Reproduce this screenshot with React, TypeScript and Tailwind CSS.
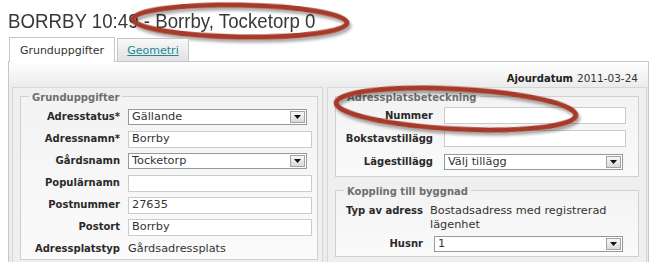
import React from 'react';

const Label: React.FC<{ w: string; children: React.ReactNode }> = ({ w, children }) => (
  <div className={`${w} shrink-0 text-right text-[10px] font-bold leading-[14px] text-[#2a2a2a]`}>{children}</div>
);

const TextBox: React.FC<{ value?: string; w: string; ml: string }> = ({ value, w, ml }) => (
  <div className={`${w} ${ml} flex h-[17px] items-center border border-[#cbcbcb] bg-white pl-[3px] text-[11.3px] leading-none text-[#333]`}>
    {value}
  </div>
);

const Select: React.FC<{ value: string; w: string; ml: string }> = ({ value, w, ml }) => (
  <div className={`${w} ${ml} flex h-[16px] items-center border border-[#8f9aa3] bg-white pl-[3px] text-[11.3px] leading-none text-[#333]`}>
    <span className="flex-1 truncate">{value}</span>
    <span className="mr-px flex h-[12px] w-[15px] items-center justify-center border border-[#a3a3a3] bg-gradient-to-b from-[#f8f8f8] to-[#d9d9d9]">
      <svg width="7" height="4" viewBox="0 0 7 4">
        <path d="M0 0h7L3.5 4z" fill="#111" />
      </svg>
    </span>
  </div>
);

const Legend: React.FC<{ children: React.ReactNode }> = ({ children }) => (
  <legend className="ml-[8px] px-[3px] pt-[3px] text-[10px] font-bold leading-[13px] text-[#6e6e6e]">{children}</legend>
);

const App: React.FC = () => {
  const left = [
    { label: 'Adresstatus*', kind: 'select', value: 'Gällande' },
    { label: 'Adressnamn*', kind: 'input', value: 'Borrby' },
    { label: 'Gårdsnamn', kind: 'select', value: 'Tocketorp' },
    { label: 'Populärnamn', kind: 'input', value: '' },
    { label: 'Postnummer', kind: 'input', value: '27635' },
    { label: 'Postort', kind: 'input', value: 'Borrby' },
  ];

  return (
    <div className="relative h-[262px] w-[653px] overflow-hidden bg-white font-['DejaVu_Sans',Verdana,sans-serif] text-[#333]">
      {/* rubrik */}
      <h1 className="pl-[8px] pt-[9px] font-['Liberation_Sans',Arial,sans-serif] text-[21px] font-normal leading-[24px] text-[#383838]">
        <span className="inline-block origin-left scale-x-[0.89] whitespace-nowrap">BORRBY 10:49 - Borrby, Tocketorp 0</span>
      </h1>

      {/* flikar */}
      <div className="relative z-10 -mb-px ml-[9px] mt-[4px] flex items-end gap-[2px]">
        <div className="flex h-[25px] w-[106px] justify-center border border-b-0 border-[#c6c6c6] bg-white pt-[6px] text-[11px] leading-[13px] text-[#333]">
          Grunduppgifter
        </div>
        <div className="flex h-[24px] w-[72px] justify-center border border-[#c6c6c6] bg-gradient-to-b from-[#f8f8f8] to-[#e2e2e2] pt-[5px] text-[11px] leading-[13px] text-[#1f8796] underline">
          Geometri
        </div>
      </div>

      {/* panel */}
      <div className="ml-[8px] w-[641px] border border-[#c6c6c6] bg-[#ececec]">
        <div className="flex h-[25px] items-start justify-end bg-gradient-to-b from-white to-[#ebebeb] pr-[10px] pt-[10px] leading-[13px]">
          <span className="text-[10px] font-bold text-[#222]">Ajourdatum</span>
          <span className="ml-[4px] text-[10.5px] text-[#333]">2011-03-24</span>
        </div>

        <div className="flex gap-[4px] pl-[3px]">
          {/* vänster kolumn */}
          <div className="h-[200px] w-[311px] border border-[#d6d6d6] bg-[#efefef] pl-[7px]">
            <fieldset className="w-[298px] border border-[#d0d0d0] bg-gradient-to-b from-[#f3f3f3] to-[#fafafa]">
              <Legend>Grunduppgifter</Legend>
              <div className="pt-[2px]">
                {left.map((r) => (
                  <div key={r.label} className="flex h-[22px] items-center">
                    <Label w="w-[99px]">{r.label}</Label>
                    {r.kind === 'select' ? (
                      <Select value={r.value} w="w-[179px]" ml="ml-[8px]" />
                    ) : (
                      <TextBox value={r.value} w="w-[184px]" ml="ml-[8px]" />
                    )}
                  </div>
                ))}
                <div className="flex h-[21px] items-center">
                  <Label w="w-[99px]">Adressplatstyp</Label>
                  <span className="ml-[8px] text-[11.3px] leading-[14px] text-[#333]">Gårdsadressplats</span>
                </div>
              </div>
            </fieldset>
          </div>

          {/* höger kolumn */}
          <div className="h-[200px] w-[320px] border border-[#d6d6d6] bg-[#efefef] pl-[7px]">
            <fieldset className="w-[304px] border border-[#d0d0d0] bg-gradient-to-b from-[#f3f3f3] to-[#fafafa] pb-[3px]">
              <Legend>Adressplatsbeteckning</Legend>
              <div className="flex h-[23px] items-center">
                <Label w="w-[97px]">Nummer</Label>
                <TextBox w="w-[182px]" ml="ml-[11px]" />
              </div>
              <div className="flex h-[23px] items-center">
                <Label w="w-[97px]">Bokstavstillägg</Label>
                <TextBox w="w-[182px]" ml="ml-[11px]" />
              </div>
              <div className="flex h-[23px] items-center">
                <Label w="w-[97px]">Lägestillägg</Label>
                <Select value="Välj tillägg" w="w-[179px]" ml="ml-[11px]" />
              </div>
            </fieldset>

            <fieldset className="mt-[5px] w-[304px] border border-[#d0d0d0] bg-gradient-to-b from-[#f3f3f3] to-[#fafafa] pb-px">
              <Legend>Koppling till byggnad</Legend>
              <div className="flex items-start pt-[6px]">
                <Label w="w-[87px]">Typ av adress</Label>
                <div className="ml-[7px] text-[11.3px] leading-[14px] text-[#333]">
                  Bostadsadress med registrerad
                  <br />
                  lägenhet
                </div>
              </div>
              <div className="flex h-[23px] items-center">
                <Label w="w-[87px]">Husnr</Label>
                <Select value="1" w="w-[189px]" ml="ml-[11px]" />
              </div>
            </fieldset>
          </div>
        </div>
      </div>

      {/* röda markeringar */}
      <svg className="pointer-events-none absolute left-0 top-0" width="653" height="262" viewBox="0 0 653 262">
        <defs>
          <filter id="skugga" x="-10%" y="-30%" width="120%" height="160%">
            <feDropShadow dx="2" dy="3" stdDeviation="1.5" floodColor="#000" floodOpacity="0.35" />
          </filter>
        </defs>
        <ellipse cx="240" cy="21" rx="107" ry="16" transform="rotate(1 240 21)" fill="none" stroke="#a63a2b" strokeWidth="5" filter="url(#skugga)" />
        <ellipse cx="456" cy="109" rx="120" ry="20" transform="rotate(3 456 109)" fill="none" stroke="#a63a2b" strokeWidth="5" filter="url(#skugga)" />
      </svg>
    </div>
  );
};

export default App;
